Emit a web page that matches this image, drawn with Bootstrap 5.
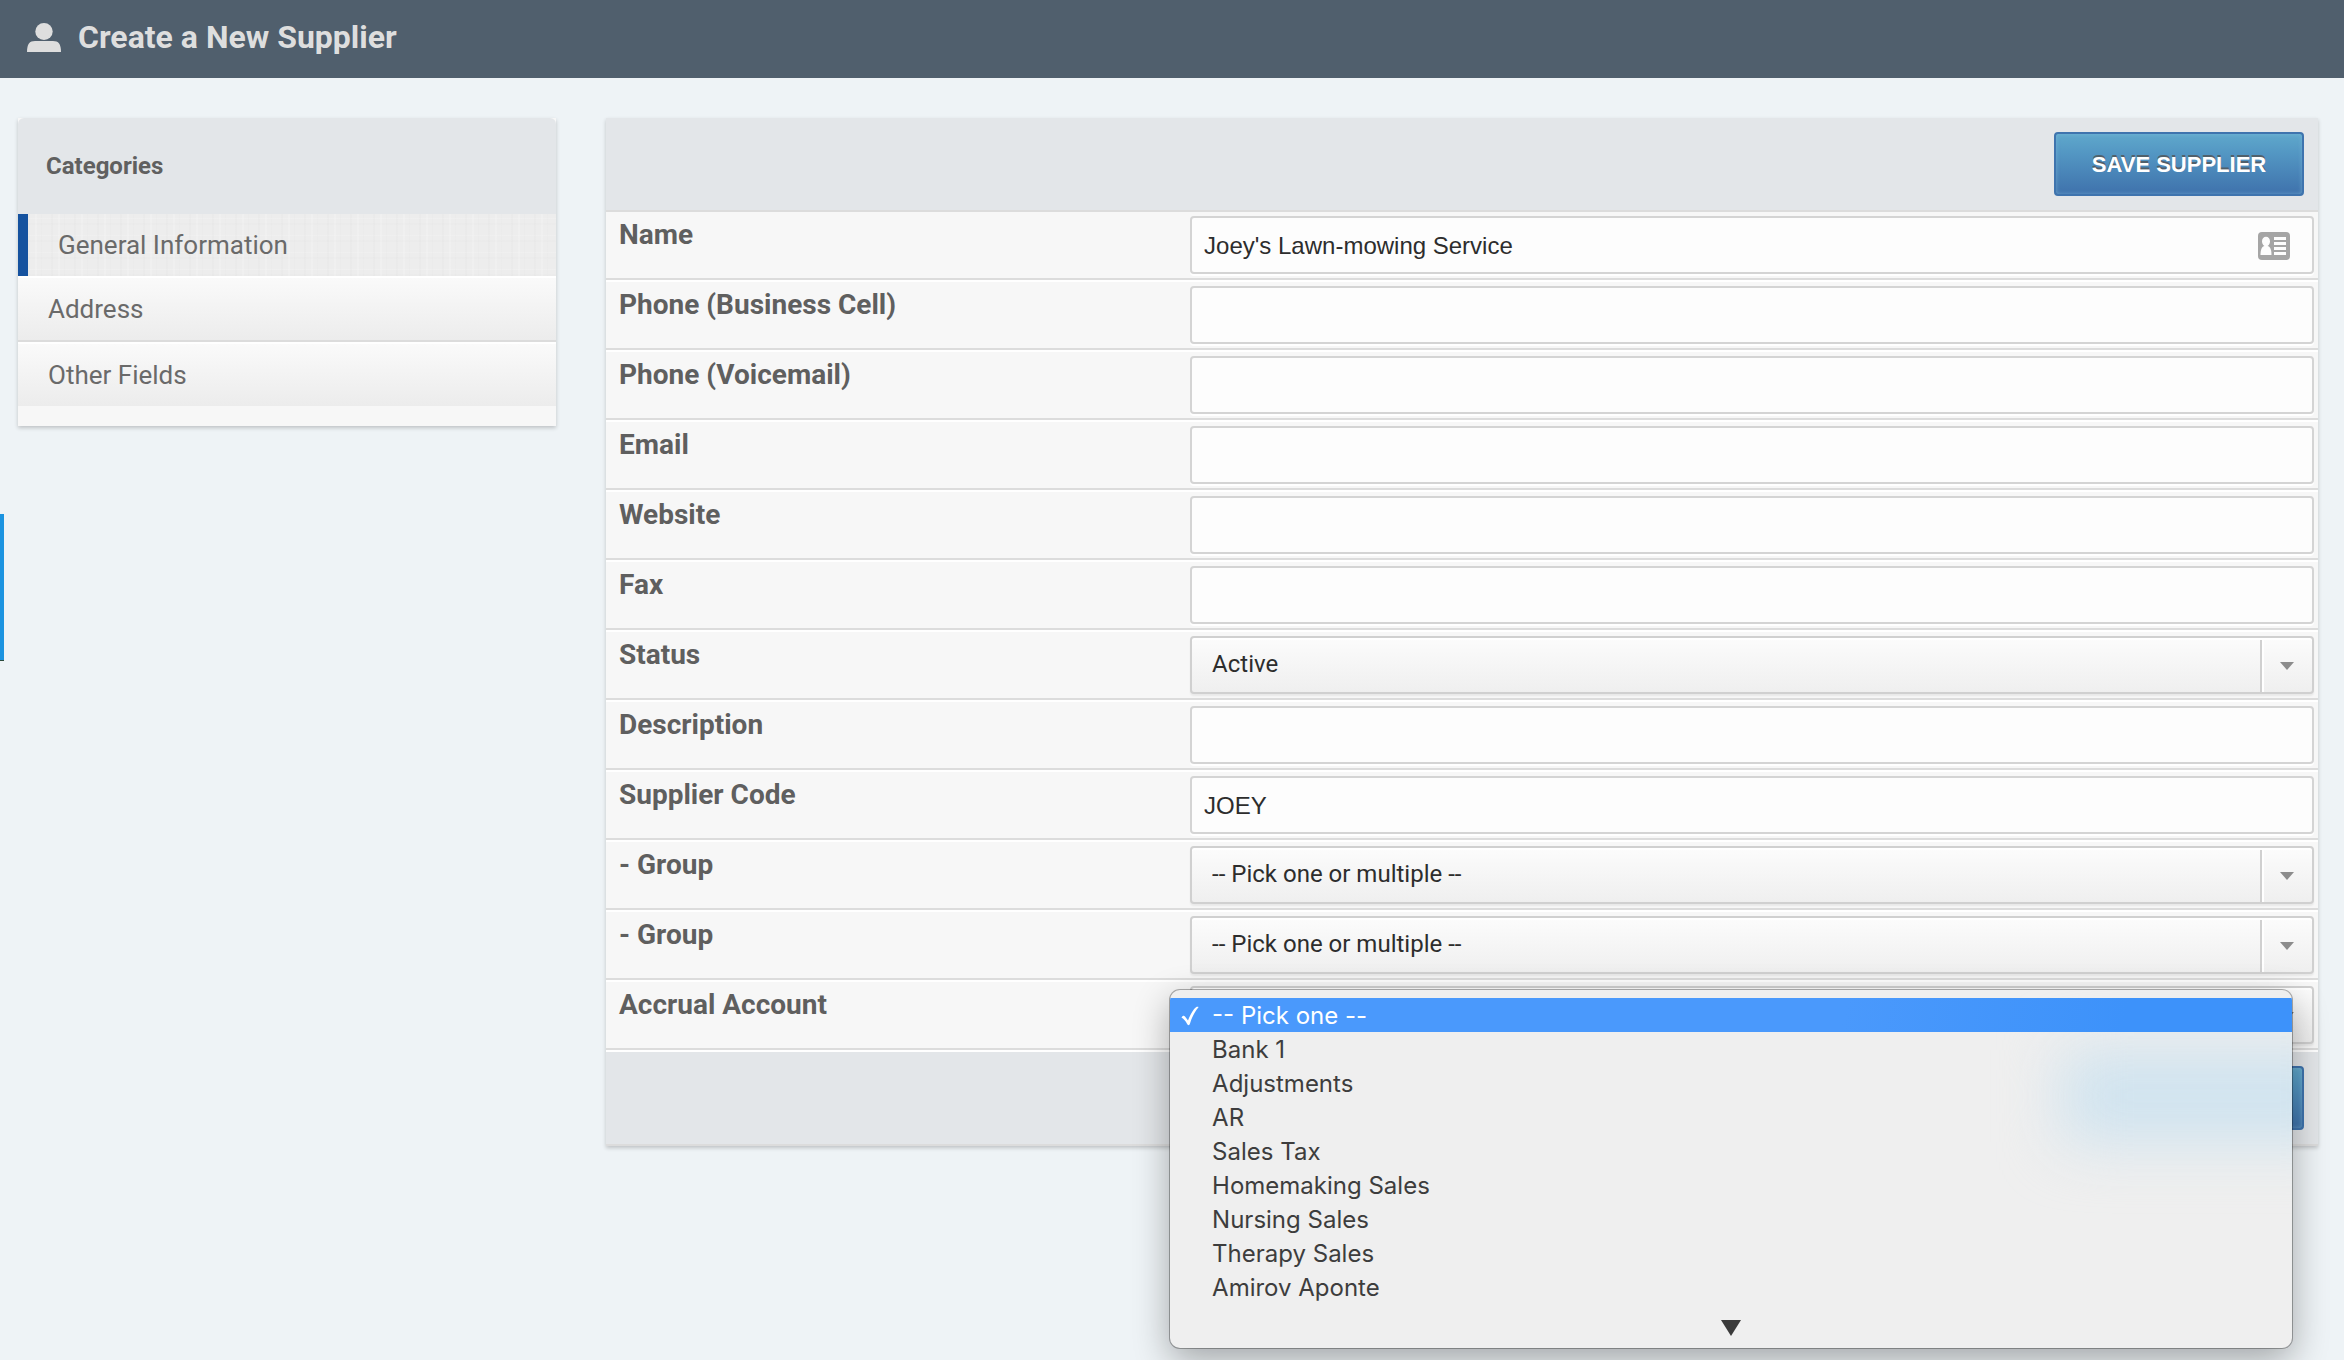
<!DOCTYPE html>
<html lang="en">
<head>
<meta charset="utf-8">
<meta name="viewport" content="width=device-width, initial-scale=1">
<title>Create a New Supplier</title>
<link href="https://cdn.jsdelivr.net/npm/bootstrap@5.3.0/dist/css/bootstrap.min.css" rel="stylesheet">
<style>
  body { background: #eef3f6; font-family: Roboto, sans-serif; color: #5f5f5f; }

  .page-bar { background: #505f6d; color: #dedede; padding: 18px 26px 22px; gap: 16px; }
  .page-bar h1 { font-size: 32px; line-height: 38px; font-weight: 700; }

  .page-body { padding: 40px 26px 40px 18px; }
  .side-col { padding-right: 37px; }
  .main-col { padding-left: 13px; }

  .panel { background: #f7f7f7; box-shadow: 0 2px 4px rgba(0,0,0,.2); }

  .cat-panel { padding-bottom: 20px; }
  .cat-head { background: #e3e6e9; border-radius: 6px 6px 0 0; padding: 34px 28px; font-size: 24px; line-height: 28px; font-weight: 700; color: #606060; }
  .cat-link { display: block; padding: 16px 30px; font-size: 26px; line-height: 30px; color: #6a6a6a; text-decoration: none; border-top: 2px solid #fff; background: linear-gradient(#fafafa, #ececec); }
  .cat-link.divided { border-bottom: 2px solid #dcdcdc; }
  .cat-link.current {
    border-top: 0; border-left: 10px solid #15529f;
    background:
      repeating-linear-gradient(90deg, rgba(0,0,0,.01) 0 2px, transparent 2px 7px, rgba(255,255,255,.16) 7px 9px, transparent 9px 13px, rgba(0,0,0,.008) 13px 14px, transparent 14px 23px),
      repeating-linear-gradient(0deg, rgba(0,0,0,.008) 0 2px, transparent 2px 6px, rgba(255,255,255,.14) 6px 7px, transparent 7px 17px),
      #ededed;
  }

  .bar-top, .bar-end { background: #e3e6e9; padding: 14px; border-bottom: 2px solid #dcdcdc; }
  .bar-end { border-top: 2px solid #fff; }

  .btn-save {
    --bs-btn-color: #fff; --bs-btn-hover-color: #fff;
    width: 250px; height: 64px; padding: 2px 0 0; border: 2px solid #3f74ae; border-radius: 4px;
    background: linear-gradient(#5fa8cc, #5295c2 35%, #3f72ac);
    box-shadow: inset 0 0 4px rgba(130,190,220,.6);
    font: 700 22px/28px "Liberation Sans", Arial, sans-serif; text-transform: uppercase;
    text-shadow: 0 -2px 0 rgba(80,80,80,.75);
  }

  .field-row { border-bottom: 2px solid #dcdcdc; }
  .field-row + .field-row { border-top: 2px solid #fff; }
  .field-name { width: 34%; padding: 7px 13px 0; font-size: 28px; line-height: 32px; font-weight: 700; }
  .field-box { padding: 4px 4px 4px 2px; }

  .field-box .form-control, .field-box .form-select {
    height: 58px; border: 2px solid #d4d4d4; border-radius: 4px; color: #2d2d2d; font-size: 24px; line-height: 28px;
  }
  .field-box .form-control { background: #fdfdfd; padding: 2px 12px 0; font-family: "Liberation Sans", Arial, sans-serif; box-shadow: 0 2px 0 #fff; }
  .field-box .form-select {
    padding: 0 64px 2px 20px; border-color: #d0d0d0; box-shadow: inset 0 2px 0 #fff, 0 2px 2px rgba(0,0,0,.06);
    background-color: #f5f5f5;
    background-image:
      url("data:image/svg+xml,%3csvg xmlns='http://www.w3.org/2000/svg' viewBox='0 0 14 8'%3e%3cpath fill='%238c8c8c' d='M0 0h14L7 8z'/%3e%3c/svg%3e"),
      linear-gradient(90deg, #d0d0d0 50%, #fff 50%),
      linear-gradient(#fcfcfc, #efefef);
    background-repeat: no-repeat;
    background-size: 14px 8px, 4px 52px, 100% 100%;
    background-position: right 18px top 24px, right 48px top 2px, 0 0;
  }
  .card-icon { position: absolute; right: 28px; top: 16px; }

  /* open list of the Accrual Account field */
  .pick-list.dropdown-menu {
    top: 8px; left: -18px; right: 26px; min-width: 0; padding: 8px 0 0; overflow: hidden;
    background: #efefef; border: 0; border-radius: 10px;
    box-shadow: 0 0 0 1px rgba(0,0,0,.3), 0 12px 36px rgba(0,0,0,.32);
    font-family: Inter, sans-serif;
  }
  .pick-glow { position: absolute; width: 290px; height: 92px; right: -60px; top: 60px; background: #cfe3ef; filter: blur(30px); }
  .pick-list .dropdown-item { position: relative; padding: 2px 42px 0; font-size: 24px; line-height: 32px; color: #3d3d3d; }
  .pick-list .dropdown-item.active { color: #fff; background: linear-gradient(100deg, #4a99fc 60%, #3d92fa 85%); }
  .pick-tick { position: absolute; left: 11px; top: 7px; }
  .pick-more { position: relative; height: 44px; padding-top: 16px; line-height: 0; }

  .edge-tab { position: absolute; left: 0; top: 514px; width: 4px; height: 147px; padding: 0; border: 0; border-bottom: 1px solid #2c4a3c; background: #1b93e0; }
</style>
<script src="https://cdn.jsdelivr.net/npm/bootstrap@5.3.0/dist/js/bootstrap.bundle.min.js"></script>
</head>
<body class="position-relative min-vh-100">

<header class="page-bar d-flex align-items-center">
  <svg width="36" height="30" viewBox="0 0 36 30" fill="currentColor" aria-hidden="true">
    <ellipse cx="18" cy="9.500" rx="8.700" ry="8.500"/>
    <path d="M1 30c0-8 2.500-11 8-11h18c5.500 0 8 3 8 11z"/>
  </svg>
  <h1 class="m-0">Create a New Supplier</h1>
</header>

<div class="page-body">
  <div class="row g-0 align-items-start">
    <aside class="col-3 side-col">
      <nav class="panel cat-panel" aria-label="Categories">
        <h2 class="cat-head m-0">Categories</h2>
        <a class="cat-link current" href="#general" aria-current="page">General Information</a>
        <a class="cat-link divided" href="#address">Address</a>
        <a class="cat-link" href="#other">Other Fields</a>
      </nav>
    </aside>

    <main class="col-9 main-col">
      <form class="panel" id="general">
        <div class="bar-top d-flex justify-content-end">
          <button type="button" class="btn btn-save">Save Supplier</button>
        </div>

        <div>
          <div class="field-row d-flex">
            <label class="field-name" for="f-name">Name</label>
            <div class="field-box flex-fill position-relative">
              <input class="form-control" id="f-name" type="text" value="Joey's Lawn-mowing Service">
              <svg class="card-icon" width="32" height="36" viewBox="0 0 32 36" aria-hidden="true">
                <rect x="0" y="4" width="32" height="28" rx="4" fill="#a5a5a5"/>
                <g fill="#fdfdfd">
                  <ellipse cx="8" cy="13.500" rx="4" ry="4.800"/>
                  <path d="M2.500 27c0-6 1.500-8.500 4-9h3c2.500.5 4 3 4 9z"/>
                  <path d="M16 9h12v3H16zM16 14h12v3H16zM16 19h12v3H16zM16 24h12v3H16z"/>
                </g>
              </svg>
            </div>
          </div>
          <div class="field-row d-flex">
            <label class="field-name" for="f-cell">Phone (Business Cell)</label>
            <div class="field-box flex-fill"><input class="form-control" id="f-cell" type="tel"></div>
          </div>
          <div class="field-row d-flex">
            <label class="field-name" for="f-voice">Phone (Voicemail)</label>
            <div class="field-box flex-fill"><input class="form-control" id="f-voice" type="tel"></div>
          </div>
          <div class="field-row d-flex">
            <label class="field-name" for="f-email">Email</label>
            <div class="field-box flex-fill"><input class="form-control" id="f-email" type="email"></div>
          </div>
          <div class="field-row d-flex">
            <label class="field-name" for="f-web">Website</label>
            <div class="field-box flex-fill"><input class="form-control" id="f-web" type="text"></div>
          </div>
          <div class="field-row d-flex">
            <label class="field-name" for="f-fax">Fax</label>
            <div class="field-box flex-fill"><input class="form-control" id="f-fax" type="tel"></div>
          </div>
          <div class="field-row d-flex">
            <label class="field-name" for="f-status">Status</label>
            <div class="field-box flex-fill"><select class="form-select" id="f-status"><option>Active</option></select></div>
          </div>
          <div class="field-row d-flex">
            <label class="field-name" for="f-desc">Description</label>
            <div class="field-box flex-fill"><input class="form-control" id="f-desc" type="text"></div>
          </div>
          <div class="field-row d-flex">
            <label class="field-name" for="f-code">Supplier Code</label>
            <div class="field-box flex-fill"><input class="form-control" id="f-code" type="text" value="JOEY"></div>
          </div>
          <div class="field-row d-flex">
            <label class="field-name" for="f-group1">- Group</label>
            <div class="field-box flex-fill"><select class="form-select" id="f-group1"><option>-- Pick one or multiple --</option></select></div>
          </div>
          <div class="field-row d-flex">
            <label class="field-name" for="f-group2">- Group</label>
            <div class="field-box flex-fill"><select class="form-select" id="f-group2"><option>-- Pick one or multiple --</option></select></div>
          </div>
          <div class="field-row d-flex">
            <label class="field-name" for="f-accrual">Accrual Account</label>
            <div class="field-box flex-fill position-relative">
              <select class="form-select" id="f-accrual"><option value="" label=" "></option></select>
              <div class="dropdown-menu show pick-list">
                <div class="pick-glow"></div>
                <button type="button" class="dropdown-item active">
                  <svg class="pick-tick" width="18" height="22" viewBox="0 0 18 22" fill="#fff" aria-hidden="true"><path d="M.5 12.500C1.500 10.500 3 10 4 11.500L7 15.500C9 10 12 4.500 15 2.200c1-.6 2.500-.6 2.500 0C13.500 7 11 12 9 18.500c-.6 2.200-2.200 2.200-3 .3C4.500 16 3 14 .5 12.500z"/></svg>-- Pick one --</button>
                <button type="button" class="dropdown-item">Bank 1</button>
                <button type="button" class="dropdown-item">Adjustments</button>
                <button type="button" class="dropdown-item">AR</button>
                <button type="button" class="dropdown-item">Sales Tax</button>
                <button type="button" class="dropdown-item">Homemaking Sales</button>
                <button type="button" class="dropdown-item">Nursing Sales</button>
                <button type="button" class="dropdown-item">Therapy Sales</button>
                <button type="button" class="dropdown-item">Amirov Aponte</button>
                <div class="pick-more text-center">
                  <svg width="20" height="16" viewBox="0 0 20 16" aria-hidden="true"><path fill="#3a3a3a" d="M0 0h20L10 16z"/></svg>
                </div>
              </div>
            </div>
          </div>
        </div>

        <div class="bar-end d-flex justify-content-end">
          <button type="button" class="btn btn-save">Save Supplier</button>
        </div>
      </form>
    </main>
  </div>
</div>

<button type="button" class="edge-tab" aria-label="Open side panel"></button>
</body>
</html>
